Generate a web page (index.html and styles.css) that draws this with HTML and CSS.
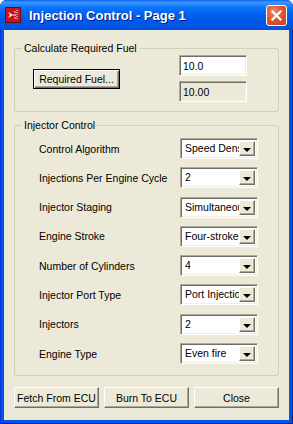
FILE: index.html
```html
<!DOCTYPE html>
<html lang="en">
<head>
    <meta charset="UTF-8">
    <title>Injection Control - Page 1</title>
    <link rel="stylesheet" href="styles.css">
</head>
<body>
    <div class="window">
        <div class="titlebar">
            <svg class="app-icon" width="16" height="16" viewBox="0 0 16 16">
                <rect x="0.5" y="0.5" width="15" height="15" fill="#c8141c" stroke="#6a0a0a"/>
                <path d="M3 5 L8 8 L3 11 L5 8 Z" fill="#fff"/>
                <path d="M8 8 H11" stroke="#fff" stroke-width="1"/>
                <path d="M12 3 V13" stroke="#fff" stroke-width="1" stroke-dasharray="1 1"/>
                <path d="M10 4 V6 M10 10 V12" stroke="#ffd0d0" stroke-width="1"/>
            </svg>
            <div class="title">Injection Control - Page 1</div>
            <div class="close-btn">
                <svg width="13" height="13" viewBox="0 0 13 13">
                    <path d="M2.5 2.5 L10.5 10.5 M10.5 2.5 L2.5 10.5" stroke="#fff" stroke-width="2.2" stroke-linecap="square"/>
                </svg>
            </div>
        </div>
        <div class="content">
            <fieldset class="group">
                <legend>Calculate Required Fuel</legend>
                <div class="fuel-row">
                    <button class="btn default-btn">Required Fuel...</button>
                    <div class="fuel-fields">
                        <div class="field">10.0</div>
                        <div class="field readonly">10.00</div>
                    </div>
                </div>
            </fieldset>

            <fieldset class="group injector">
                <legend>Injector Control</legend>
                <div class="rows">
                    <div class="row">
                        <span class="label">Control Algorithm</span>
                        <div class="combo"><span class="value">Speed Density</span><span class="arrow"></span></div>
                    </div>
                    <div class="row">
                        <span class="label">Injections Per Engine Cycle</span>
                        <div class="combo"><span class="value">2</span><span class="arrow"></span></div>
                    </div>
                    <div class="row">
                        <span class="label">Injector Staging</span>
                        <div class="combo"><span class="value">Simultaneous</span><span class="arrow"></span></div>
                    </div>
                    <div class="row">
                        <span class="label">Engine Stroke</span>
                        <div class="combo"><span class="value">Four-stroke</span><span class="arrow"></span></div>
                    </div>
                    <div class="row">
                        <span class="label">Number of Cylinders</span>
                        <div class="combo"><span class="value">4</span><span class="arrow"></span></div>
                    </div>
                    <div class="row">
                        <span class="label">Injector Port Type</span>
                        <div class="combo"><span class="value">Port Injection</span><span class="arrow"></span></div>
                    </div>
                    <div class="row">
                        <span class="label">Injectors</span>
                        <div class="combo"><span class="value">2</span><span class="arrow"></span></div>
                    </div>
                    <div class="row">
                        <span class="label">Engine Type</span>
                        <div class="combo"><span class="value">Even fire</span><span class="arrow"></span></div>
                    </div>
                </div>
            </fieldset>

            <div class="actions">
                <button class="btn">Fetch From ECU</button>
                <button class="btn">Burn To ECU</button>
                <button class="btn">Close</button>
            </div>
        </div>
    </div>
</body>
</html>
```

FILE: styles.css
```css
* {
    margin: 0;
    padding: 0;
    box-sizing: border-box;
}

body {
    background: #fff;
    font-family: "Liberation Sans", Arial, sans-serif;
    font-size: 10.5px;
    color: #000;
}

.window {
    width: 293px;
    height: 424px;
    display: flex;
    flex-direction: column;
    padding: 0 4px 4px;
    background: #0055e5;
    border-radius: 7px 7px 0 0;
    box-shadow: inset 1px 0 #0831d9, inset -1px 0 #001ea0, inset 0 -1px #001ea0;
}

.titlebar {
    height: 30px;
    margin: 0 -4px;
    padding: 0 6px 0 5px;
    display: flex;
    align-items: center;
    border-radius: 7px 7px 0 0;
    background: linear-gradient(to bottom, #0a5ded 0%, #3d95ff 7%, #2a8bff 14%, #0a74f9 26%, #0264f0 45%, #005ae8 65%, #0056e4 85%, #0050dc 100%);
}

.app-icon {
    flex-shrink: 0;
    margin-right: 8px;
}

.title {
    color: #fff;
    font-size: 13px;
    font-weight: bold;
    text-shadow: 1px 1px #0a1883;
    margin-top: 1px;
}

.close-btn {
    margin-left: auto;
    width: 21px;
    height: 21px;
    display: flex;
    align-items: center;
    justify-content: center;
    border: 1px solid #fff;
    border-radius: 3px;
    background: radial-gradient(circle at 35% 30%, #f08a6c 0%, #e2552e 45%, #c8401c 100%);
}

.content {
    flex: 1;
    display: flex;
    flex-direction: column;
    background: #ece9d8;
    padding: 12px 10px 0;
}

.group {
    border: 1px solid #d0d0bf;
    border-radius: 3px;
    min-width: 0;
}

.group legend {
    margin-left: 7px;
    padding: 0 2px;
    line-height: 13px;
}

.fuel-row {
    display: flex;
    align-items: center;
    justify-content: space-between;
    padding: 0 31px 9px 18px;
}

.fuel-fields {
    display: flex;
    flex-direction: column;
    gap: 5px;
}

.field {
    width: 68px;
    height: 21px;
    padding: 3px 3px 0;
    background: #fff;
    border: 1px solid;
    border-color: #aca899 #fff #fff #aca899;
    box-shadow: inset 1px 1px #716f64, inset -1px -1px #f1efe2;
    line-height: 14px;
}

.field.readonly {
    background: #ece9d8;
}

.btn {
    font-family: inherit;
    font-size: 10.5px;
    color: #000;
    background: #ece9d8;
    border: 1px solid;
    border-color: #fff #716f64 #716f64 #fff;
    box-shadow: inset -1px -1px #aca899;
}

.default-btn {
    width: 87px;
    height: 20px;
    border: 1px solid #000;
    box-shadow: inset 1px 1px #fff, inset -1px -1px #716f64, inset -2px -2px #aca899;
}

.injector {
    margin-top: 7px;
}

.rows {
    display: flex;
    flex-direction: column;
    gap: 8.3px;
    padding: 6px 20px 11px 24px;
}

.row {
    display: flex;
    align-items: center;
    justify-content: space-between;
    height: 21px;
}

.combo {
    width: 78px;
    height: 21px;
    display: flex;
    background: #fff;
    border: 1px solid;
    border-color: #aca899 #fff #fff #aca899;
    box-shadow: inset 1px 1px #716f64, inset -1px -1px #f1efe2;
    padding: 2px 2px 2px 3px;
}

.combo .value {
    flex: 1;
    overflow: hidden;
    white-space: nowrap;
    line-height: 15px;
    padding-left: 1px;
}

.combo .arrow {
    width: 16px;
    flex-shrink: 0;
    position: relative;
    background: #ece9d8;
    border: 1px solid;
    border-color: #fff #716f64 #716f64 #fff;
    box-shadow: inset -1px -1px #aca899;
}

.combo .arrow::after {
    content: '';
    position: absolute;
    left: 3px;
    top: 6px;
    border-left: 4px solid transparent;
    border-right: 4px solid transparent;
    border-top: 4px solid #000;
}

.actions {
    display: flex;
    gap: 5px;
    margin-top: 11px;
}

.actions .btn {
    width: 85px;
    height: 21px;
}
```
